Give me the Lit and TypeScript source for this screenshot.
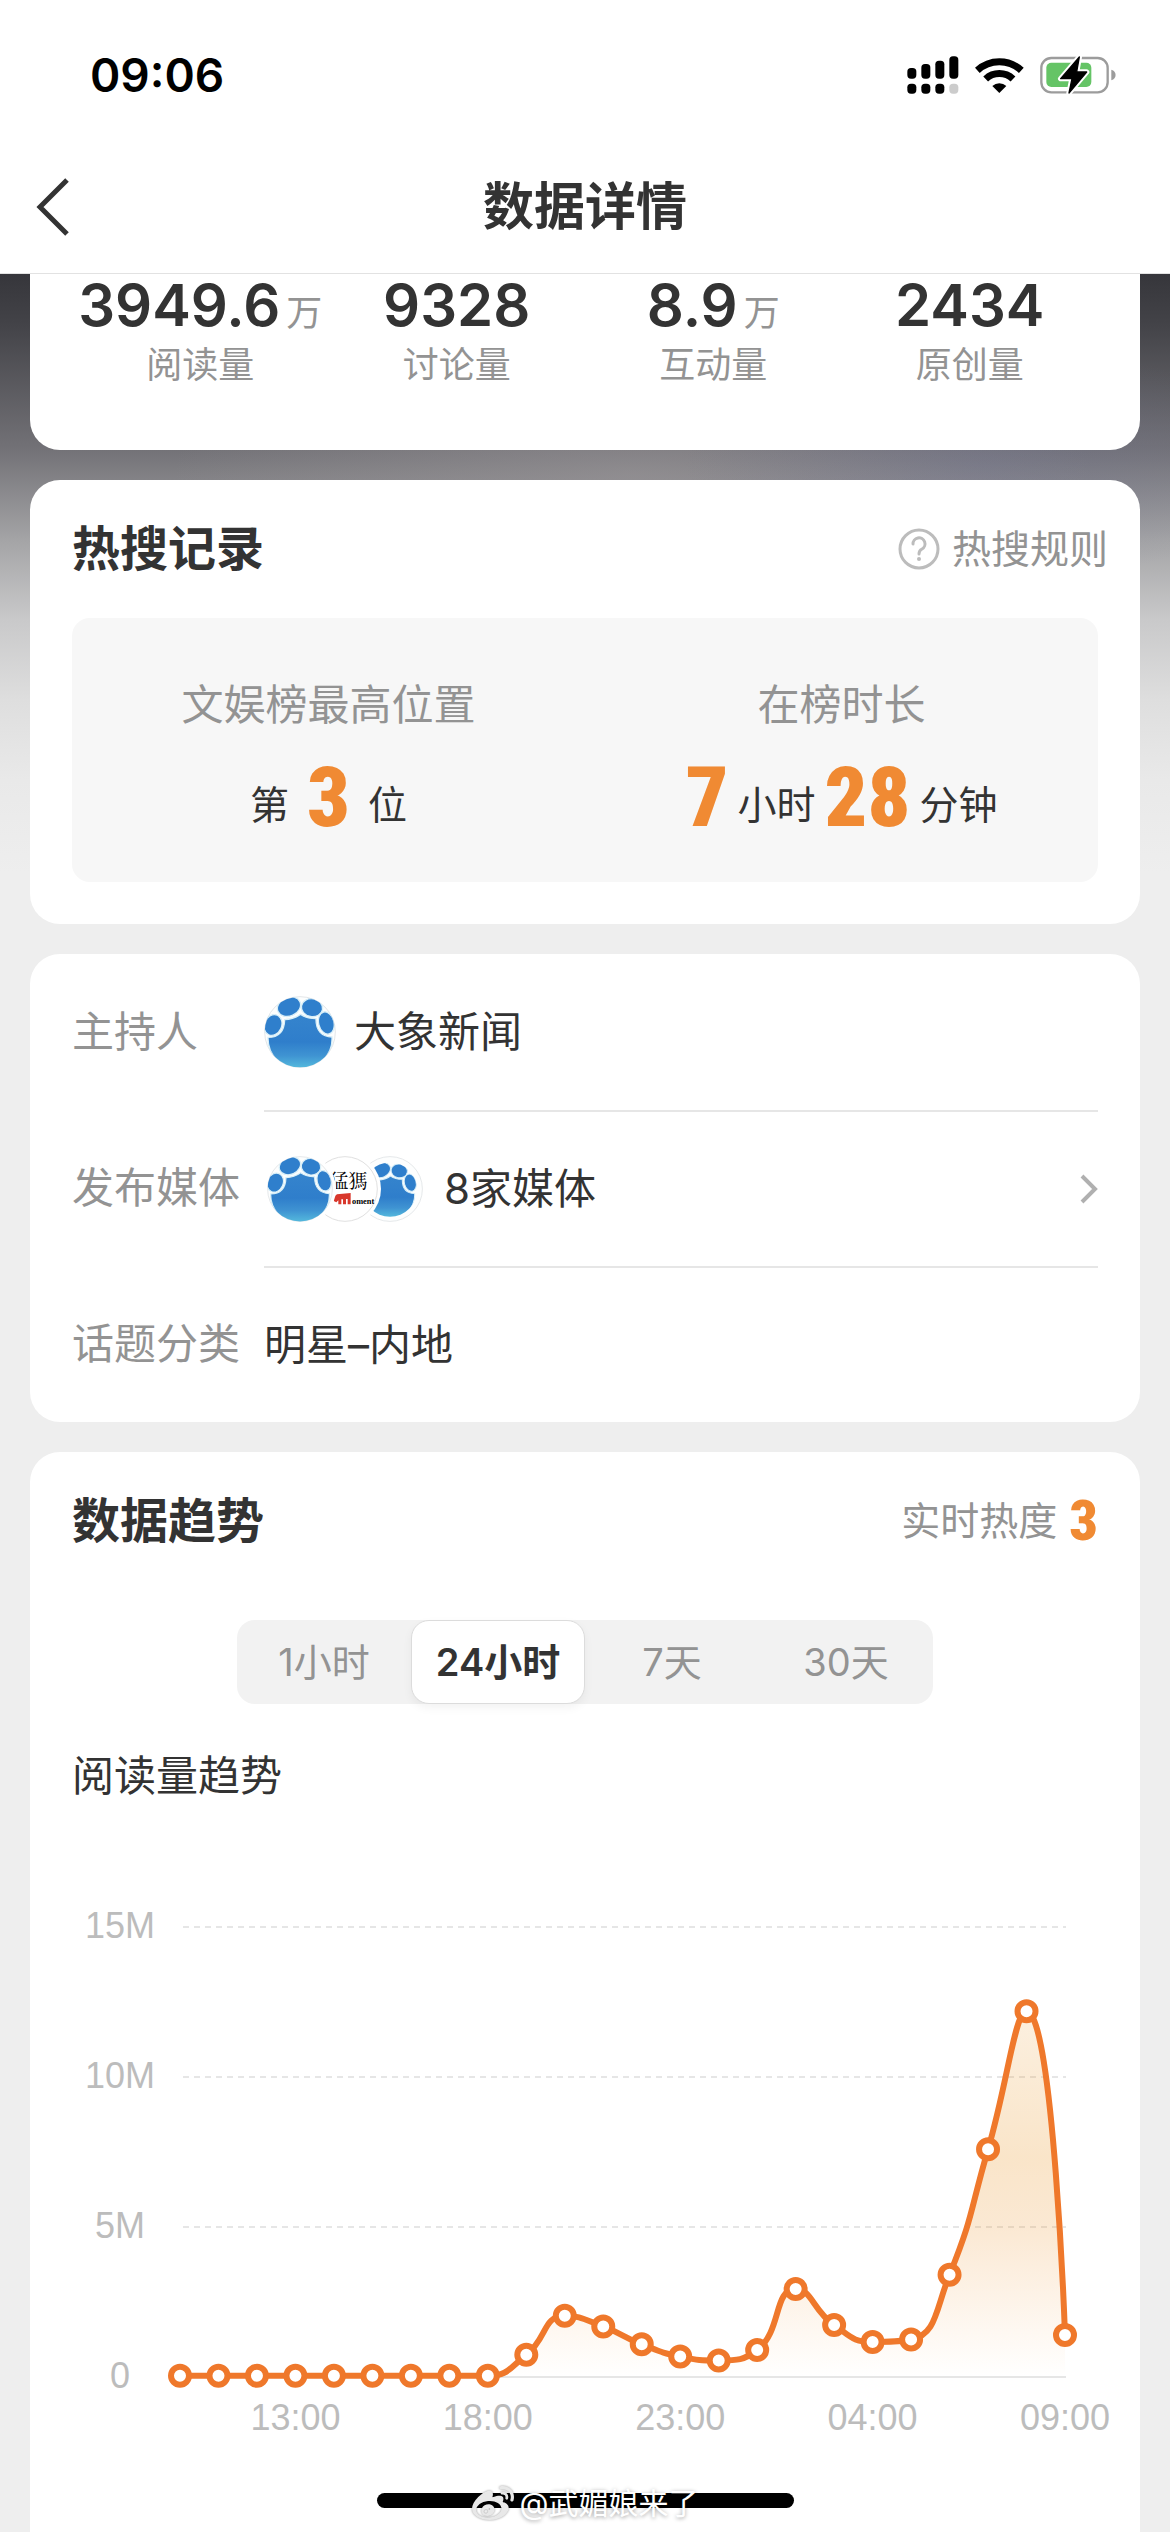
import { LitElement, html, svg, css } from "lit";
import { customElement, property, state } from "lit/decorators.js";
import { classMap } from "lit/directives/class-map.js";

type Point = [number, number];

/** Reads per hour, in millions, oldest first. */
const READS = [
  0.04, 0.04, 0.04, 0.04, 0.04, 0.04, 0.04, 0.04, 0.04, 0.74, 2.04, 1.68, 1.09, 0.68, 0.55, 0.9,
  2.93, 1.73, 1.17, 1.25, 3.41, 7.59, 12.19, 1.4,
];
const HOURS: Array<[number, string]> = [
  [3, "13:00"],
  [8, "18:00"],
  [13, "23:00"],
  [18, "04:00"],
  [23, "09:00"],
];
const LEVELS: Array<[number, string]> = [
  [15, "15M"],
  [10, "10M"],
  [5, "5M"],
  [0, "0"],
];

const clamp = (v: number, a: number, b: number) =>
  Math.max(Math.min(a, b), Math.min(Math.max(a, b), v));

/** Smooth path whose control points never leave the box of their segment. */
function smoothPath(pts: Point[]): string {
  const before: Point[] = [];
  const after: Point[] = [];
  pts.forEach((p, i) => {
    const prev = pts[i - 1];
    const next = pts[i + 1];
    if (!prev || !next) {
      before.push(p);
      after.push(p);
      return;
    }
    const lp = Math.hypot(p[0] - prev[0], p[1] - prev[1]);
    const ln = Math.hypot(next[0] - p[0], next[1] - p[1]);
    const k = (0.5 * ln) / (lp + ln);
    let a: Point = [p[0] + (next[0] - prev[0]) * k, p[1] + (next[1] - prev[1]) * k];
    a = [clamp(a[0], p[0], next[0]), clamp(a[1], p[1], next[1])];
    let b: Point = [p[0] - ((a[0] - p[0]) * lp) / ln, p[1] - ((a[1] - p[1]) * lp) / ln];
    b = [clamp(b[0], p[0], prev[0]), clamp(b[1], p[1], prev[1])];
    a = [p[0] + ((p[0] - b[0]) * ln) / lp, p[1] + ((p[1] - b[1]) * ln) / lp];
    before.push(b);
    after.push(a);
  });
  return pts
    .map((p, i) =>
      i === 0
        ? `M${p.join(" ")}`
        : `C${after[i - 1].join(" ")} ${before[i].join(" ")} ${p.join(" ")}`
    )
    .join("");
}

@customElement("trend-chart")
export class TrendChart extends LitElement {
  static styles = css`
    :host {
      display: block;
    }
    .chart {
      display: block;
      width: 100%;
      overflow: visible;
    }
    .grid {
      stroke: #e6e6e6;
      stroke-width: 2;
    }
    .dashed {
      stroke-dasharray: 6 5;
    }
    .line {
      fill: none;
      stroke: #ef782b;
      stroke-width: 6;
      stroke-linejoin: round;
    }
    .dot {
      fill: #fff;
      stroke: #ef782b;
      stroke-width: 6;
    }
    .tick {
      font: 36px "Liberation Sans", Arial, sans-serif;
      fill: #bcbcbc;
      text-anchor: middle;
    }
  `;

  @property({ attribute: false }) values: number[] = [];

  render() {
    const zero = 571;
    const y = (v: number) => zero - v * 30;
    const x = (i: number) => 108 + (i * 885) / (this.values.length - 1);
    const pts = this.values.map((v, i): Point => [x(i), y(v)]);
    const path = smoothPath(pts);
    return html`
      <svg class="chart" viewBox="0 0 1026 650" role="img" aria-label="阅读量趋势">
        <defs>
          <linearGradient id="fill" x1="0" y1="0" x2="0" y2="1">
            <stop offset="0" stop-color="#e8921e" stop-opacity="0.14" />
            <stop offset="0.4" stop-color="#e8921e" stop-opacity="0.24" />
            <stop offset="0.6" stop-color="#ea9026" stop-opacity="0.2" />
            <stop offset="1" stop-color="#f0902b" stop-opacity="0" />
          </linearGradient>
        </defs>
        ${LEVELS.map(
          ([v, label]) => svg`
            <line class=${v ? "grid dashed" : "grid"} x1="111" x2="994" y1=${y(v)} y2=${y(v)} />
            <text class="tick" x="48" y=${y(v) + 11}>${label}</text>`
        )}
        <path d="${path}L${x(this.values.length - 1)} ${zero}L${x(0)} ${zero}Z" fill="url(#fill)" />
        <path class="line" d=${path} />
        ${pts.map((p) => svg`<circle class="dot" cx=${p[0]} cy=${p[1]} r="9" />`)}
        ${HOURS.map(([i, label]) => svg`<text class="tick" x=${x(i)} y="624">${label}</text>`)}
      </svg>
    `;
  }
}

@customElement("paw-avatar")
export class PawAvatar extends LitElement {
  static styles = css`
    :host {
      display: block;
    }
    .disc {
      display: block;
      width: 100%;
      height: 100%;
    }
  `;

  @property({ type: Boolean }) inset = false;

  render() {
    return html`
      <svg class="disc" viewBox="42 48 216 216" aria-hidden="true">
        <defs>
          <linearGradient id="paw" x1="0" y1="0" x2="0" y2="1">
            <stop offset="0" stop-color="#3584cd" />
            <stop offset="0.5" stop-color="#2f7ecb" />
            <stop offset="0.75" stop-color="#3f93d2" />
            <stop offset="1" stop-color="#57bede" />
          </linearGradient>
          <clipPath id="round"><circle cx="150" cy="156" r="106" /></clipPath>
        </defs>
        <circle cx="150" cy="156" r="106" fill="#fdfefe" stroke="#e3e6e8" stroke-width="3" />
        <g
          clip-path="url(#round)"
          transform=${this.inset ? "translate(24 27) scale(0.84)" : "translate(0 0)"}
        >
          <g stroke="#d8eff8" stroke-width="4">
            <path
              fill="url(#paw)"
              d="M54 172C84 172 103 156 104 119C126 118 141 111 152 103C162 110 176 116 198 116C197 152 216 170 246 171C249 226 204 268 150 268C96 268 53 228 54 172Z"
            />
            <ellipse cx="117" cy="80" rx="36" ry="28" transform="rotate(-24 117 80)" fill="#2f7fcc" />
            <ellipse cx="186" cy="83" rx="32" ry="27" transform="rotate(10 186 83)" fill="#2f7fcc" />
            <ellipse cx="69" cy="135" rx="26" ry="32" transform="rotate(24 69 135)" fill="#2f7fcc" />
            <ellipse cx="229" cy="129" rx="23" ry="34" transform="rotate(-14 229 129)" fill="#2f7fcc" />
          </g>
        </g>
      </svg>
    `;
  }
}

@customElement("app-root")
export class AppRoot extends LitElement {
  static styles = css`
    :host {
      display: block;
      font-family: Inter, "Noto Sans CJK SC", sans-serif;
      color: #333;
    }
    * {
      box-sizing: border-box;
    }
    h1,
    h2,
    h3,
    p,
    dl,
    dd,
    dt {
      margin: 0;
    }
    button {
      font: inherit;
      color: inherit;
      background: none;
      border: 0;
      padding: 0;
    }
    a {
      color: inherit;
      text-decoration: none;
    }
    svg {
      display: block;
      flex: none;
    }
    .screen {
      position: relative;
      display: flex;
      flex-direction: column;
      min-height: 100vh;
      background: #eee;
    }
    .top {
      background: #fff;
      border-bottom: 1px solid #e2e2e2;
    }
    .status {
      display: flex;
      align-items: center;
      justify-content: space-between;
      height: 141px;
      padding: 9px 54px 0 90px;
      color: #000;
    }
    .clock {
      font-size: 46px;
      font-weight: 600;
      line-height: 60px;
    }
    .signals {
      display: flex;
      align-items: center;
      gap: 16px;
    }
    .nav {
      display: grid;
      grid-template-columns: 1fr auto 1fr;
      align-items: center;
      height: 132px;
      padding: 0 36px;
    }
    .title {
      font-size: 51px;
      line-height: 72px;
      font-weight: 600;
    }
    .back {
      justify-self: start;
    }
    .body {
      flex: 1;
      display: flex;
      flex-direction: column;
      gap: 30px;
      padding: 0 30px;
      background:
        radial-gradient(ellipse 300px 120px at 84% 190px, rgba(110, 114, 150, 0.3), transparent),
        radial-gradient(ellipse 460px 160px at 54% 200px, rgba(165, 160, 162, 0.4), transparent),
        linear-gradient(
          #36363b 0,
          #434348 50px,
          #737277 176px,
          #a4a4a6 266px,
          #c9c9ca 346px,
          #dedede 426px,
          #e9e9e9 506px,
          #eee 600px
        );
    }
    .card {
      background: #fff;
      border-radius: 30px;
      padding: 0 42px;
    }
    .stats {
      display: grid;
      grid-template-columns: repeat(4, 1fr);
      border-radius: 0 0 30px 30px;
      padding-bottom: 60px;
    }
    .stat {
      display: flex;
      flex-direction: column-reverse;
      align-items: center;
      gap: 4px;
    }
    .stat-name {
      font-size: 36px;
      line-height: 50px;
      color: #939393;
    }
    .stat-value {
      display: flex;
      align-items: baseline;
      gap: 6px;
      font-size: 58px;
      line-height: 62px;
      font-weight: 600;
    }
    .unit {
      font-size: 36px;
      line-height: 36px;
      font-weight: 400;
      color: #939393;
    }
    .head {
      display: flex;
      align-items: center;
      justify-content: space-between;
      height: 138px;
    }
    .heading {
      font-size: 48px;
      line-height: 66px;
      font-weight: 700;
    }
    .aside {
      display: flex;
      align-items: center;
      gap: 12px;
      font-size: 39px;
      line-height: 54px;
      color: #939393;
    }
    .rules {
      margin-right: -10px;
    }
    .record {
      padding-bottom: 42px;
    }
    .panel {
      display: grid;
      grid-template-columns: 1fr 1fr;
      padding: 57px 0 48px;
      background: #f7f7f7;
      border-radius: 18px;
    }
    .fact {
      display: flex;
      flex-direction: column;
      align-items: center;
      gap: 27px;
    }
    .fact-name {
      font-size: 42px;
      line-height: 60px;
      font-weight: 400;
      color: #939393;
    }
    .fact-value {
      display: flex;
      align-items: flex-end;
      gap: 9px;
      font-size: 39px;
      line-height: 58px;
    }
    .spaced {
      gap: 18px;
    }
    .big,
    .heat {
      font-family: "Roboto Condensed", "Liberation Sans Narrow", "Liberation Sans", sans-serif;
      font-weight: 900;
      color: #f08a33;
    }
    .big {
      font-size: 84px;
      line-height: 72px;
    }
    .heat {
      font-size: 56px;
      line-height: 54px;
    }
    .row {
      display: grid;
      grid-template-columns: 192px 1fr;
      align-items: stretch;
      height: 156px;
      font-size: 42px;
      line-height: 60px;
    }
    .row-name {
      align-self: center;
      color: #939393;
    }
    .row-value {
      display: flex;
      align-items: center;
      gap: 18px;
    }
    .ruled {
      border-top: 2px solid #e6e6e6;
    }
    .link {
      flex: 1;
      display: flex;
      align-items: center;
      gap: 21px;
    }
    .push {
      margin-left: auto;
    }
    .avatar {
      width: 72px;
      height: 72px;
    }
    .stack {
      display: flex;
      padding-left: 3px;
    }
    .chip {
      position: relative;
      width: 66px;
      height: 66px;
      margin-right: -21px;
      border-radius: 50%;
      background: #fff;
      box-shadow: 0 0 0 3px #fff;
    }
    .first {
      z-index: 3;
    }
    .second {
      z-index: 2;
    }
    .third {
      z-index: 1;
      margin-right: 0;
    }
    .brand {
      font-family: "Noto Serif CJK SC", "Noto Sans CJK SC", serif;
      font-size: 58px;
    }
    .brand-sub {
      font: bold 25px "Liberation Serif", serif;
    }
    .trend {
      flex: 1;
      display: flex;
      flex-direction: column;
      border-radius: 30px 30px 0 0;
      padding-bottom: 72px;
    }
    .tabs {
      align-self: center;
      display: grid;
      grid-template-columns: repeat(4, 174px);
      margin-top: 30px;
      border-radius: 18px;
      background: #f2f2f2;
    }
    .tab {
      height: 84px;
      border: 1px solid transparent;
      border-radius: 18px;
      font-size: 38px;
      line-height: 54px;
      color: #939393;
    }
    .selected {
      background: #fff;
      border-color: #dcdcdc;
      box-shadow: 0 4px 10px rgba(0, 0, 0, 0.05);
      font-weight: 600;
      color: #333;
    }
    .subtitle {
      margin-top: 42px;
      font-size: 42px;
      line-height: 60px;
      font-weight: 400;
    }
    .home {
      position: absolute;
      left: 50%;
      bottom: 24px;
      width: 417px;
      height: 15px;
      margin-left: -208px;
      border-radius: 8px;
      background: #000;
    }
    .mark {
      position: absolute;
      left: 0;
      right: 0;
      bottom: 8px;
      display: flex;
      align-items: center;
      justify-content: center;
      gap: 6px;
      font-size: 30px;
      line-height: 40px;
      color: #fff;
      text-shadow: 0 1px 4px rgba(0, 0, 0, 0.4);
    }
    .weibo {
      filter: drop-shadow(0 0 1px rgba(0, 0, 0, 0.4));
    }
  `;

  @state() private range = "24小时";

  private stat(value: string, name: string, unit = "") {
    return html`
      <div class="stat">
        <dt class="stat-name">${name}</dt>
        <dd class="stat-value">${value}${unit ? html`<span class="unit">${unit}</span>` : ""}</dd>
      </div>
    `;
  }

  private signals() {
    const bars = [82, 70, 60, 47];
    return html`
      <div class="signals" aria-hidden="true">
        <svg width="52" height="38" viewBox="80 46 156 114">
          ${bars.map(
            (top, i) => svg`
              <rect x=${81 + i * 42} y=${top} width="27" height=${114 - top} rx="11" />
              <rect x=${81 + i * 42} y="129" width="27" height="30" rx="11" fill=${
                i === 3 ? "#ccc" : "#000"
              } />`
          )}
        </svg>
        <svg width="49" height="38" viewBox="284 42 147 114">
          <g fill="none" stroke="#000" stroke-width="21">
            <path d="M291 85A97 97 0 0 1 423 85" />
            <path d="M316 111A60 60 0 0 1 398 111" />
          </g>
          <path d="M357 153L336 132A30 30 0 0 1 378 132Z" />
        </svg>
        <svg width="76" height="38" viewBox="479 45 228 114">
          <rect x="483" y="51" width="199" height="103" rx="30" fill="none" stroke="#9c9c9c" stroke-width="7" />
          <rect x="498" y="65" width="135" height="73" rx="15" fill="#65c466" />
          <path d="M693 86C710 90 710 114 693 118Z" fill="#9c9c9c" />
          <path
            d="M597 48L541 113H575L566 156L619 93H589Z"
            stroke="#fff"
            stroke-width="16"
            stroke-linejoin="round"
          />
          <path d="M597 48L541 113H575L566 156L619 93H589Z" stroke="#000" stroke-width="4" stroke-linejoin="round" />
        </svg>
      </div>
    `;
  }

  render() {
    const ranges = ["1小时", "24小时", "7天", "30天"];
    return html`
      <div class="screen">
        <header class="top">
          <div class="status">
            <span class="clock">09:06</span>
            ${this.signals()}
          </div>
          <nav class="nav">
            <button class="back" aria-label="返回">
              <svg width="34" height="58" viewBox="0 0 34 58" fill="none" stroke="#333" stroke-width="5">
                <path d="M31 2L4 29L31 56" />
              </svg>
            </button>
            <h1 class="title">数据详情</h1>
          </nav>
        </header>

        <main class="body">
          <dl class="card stats">
            ${this.stat("3949.6", "阅读量", "万")} ${this.stat("9328", "讨论量")}
            ${this.stat("8.9", "互动量", "万")} ${this.stat("2434", "原创量")}
          </dl>

          <section class="card record">
            <div class="head">
              <h2 class="heading">热搜记录</h2>
              <a class="aside rules" href="#rules">
                <svg width="42" height="42" viewBox="0 0 42 42" fill="none" stroke="#bcbcbc" stroke-width="3">
                  <circle cx="21" cy="21" r="19" />
                  <path d="M15 16A6 6 0 1 1 24 21C22 22 21 23 21 26" stroke-linecap="round" />
                  <circle cx="21" cy="31" r="2" fill="#bcbcbc" stroke="none" />
                </svg>
                热搜规则
              </a>
            </div>
            <div class="panel">
              <div class="fact">
                <h3 class="fact-name">文娱榜最高位置</h3>
                <p class="fact-value spaced"><span>第</span><span class="big">3</span><span>位</span></p>
              </div>
              <div class="fact">
                <h3 class="fact-name">在榜时长</h3>
                <p class="fact-value">
                  <span class="big">7</span><span>小时</span><span class="big">28</span><span>分钟</span>
                </p>
              </div>
            </div>
          </section>

          <dl class="card">
            <div class="row">
              <dt class="row-name">主持人</dt>
              <dd class="row-value"><paw-avatar class="avatar"></paw-avatar>大象新闻</dd>
            </div>
            <div class="row">
              <dt class="row-name">发布媒体</dt>
              <dd class="row-value ruled">
                <a class="link" href="#media">
                  <span class="stack">
                    <paw-avatar class="chip first"></paw-avatar>
                    <span class="chip second">
                      <svg width="66" height="66" viewBox="187 525 198 198" aria-hidden="true">
                        <circle cx="286" cy="624" r="97" fill="#fff" stroke="#e0e0e0" stroke-width="3" />
                        <text class="brand" x="238" y="621">猛獁</text>
                        <path
                          fill="#d8372c"
                          d="M252 648L262 640L303 636V670H294V654H289V670H280V655H275V670H266V658L260 664L252 660Z"
                        />
                        <text class="brand-sub" x="307" y="669">oment</text>
                      </svg>
                    </span>
                    <paw-avatar class="chip third" inset></paw-avatar>
                  </span>
                  <span>8家媒体</span>
                  <svg class="push" width="18" height="30" viewBox="0 0 18 30" fill="none" stroke="#b0b0b0" stroke-width="4">
                    <path d="M2 2L15 15L2 28" />
                  </svg>
                </a>
              </dd>
            </div>
            <div class="row">
              <dt class="row-name">话题分类</dt>
              <dd class="row-value ruled">明星–内地</dd>
            </div>
          </dl>

          <section class="card trend">
            <div class="head">
              <h2 class="heading">数据趋势</h2>
              <p class="aside">实时热度<span class="heat">3</span></p>
            </div>
            <div class="tabs" role="tablist">
              ${ranges.map(
                (r) => html`<button
                  class=${classMap({ tab: true, selected: r === this.range })}
                  role="tab"
                  aria-selected=${r === this.range}
                  @click=${() => (this.range = r)}
                >
                  ${r}
                </button>`
              )}
            </div>
            <h3 class="subtitle">阅读量趋势</h3>
            <trend-chart .values=${READS}></trend-chart>
          </section>
        </main>

        <div class="home"></div>
        <div class="mark">
          <svg class="weibo" width="42" height="42" viewBox="0 0 24 24" fill="#e8e8e8" aria-hidden="true">
            <path
              d="M10.098 20.323c-3.977.391-7.414-1.406-7.672-4.02-.259-2.609 2.759-5.047 6.74-5.441 3.979-.394 7.413 1.404 7.671 4.018.259 2.6-2.759 5.049-6.737 5.439l-.002.004zM9.05 17.219c-.384.616-1.208.884-1.829.602-.612-.279-.793-.991-.406-1.593.379-.595 1.176-.861 1.793-.601.622.263.82.972.442 1.592zm1.27-1.627c-.141.237-.449.353-.689.253-.236-.09-.313-.361-.177-.586.138-.227.436-.346.672-.24.239.09.315.36.18.601l.014-.028zm.176-2.719c-1.893-.493-4.033.45-4.857 2.118-.836 1.704-.026 3.591 1.886 4.21 1.983.64 4.318-.341 5.132-2.179.8-1.793-.201-3.642-2.161-4.149zm7.563-1.224c-.346-.105-.57-.18-.405-.615.375-.977.42-1.804 0-2.404-.781-1.112-2.915-1.053-5.364-.03 0 0-.766.331-.571-.271.376-1.217.315-2.224-.27-2.809-1.338-1.337-4.869.045-7.888 3.08C1.309 10.87 0 13.273 0 15.348c0 3.981 5.099 6.395 10.086 6.395 6.536 0 10.888-3.801 10.888-6.82 0-1.822-1.547-2.854-2.915-3.284v.01zm1.908-5.092c-.766-.856-1.908-1.187-2.96-.962-.436.09-.706.511-.616.932.09.42.511.691.932.602.511-.105 1.067.044 1.442.465.376.421.466.977.316 1.473-.136.406.089.856.51.992.405.119.857-.105.992-.512.33-1.021.12-2.178-.646-3.035l.03.045zm2.418-2.195c-1.576-1.757-3.905-2.419-6.054-1.968-.496.104-.812.587-.706 1.081.104.496.586.813 1.082.707 1.532-.331 3.185.15 4.296 1.383 1.112 1.246 1.429 2.943.947 4.416-.165.48.106 1.007.586 1.157.479.165.991-.104 1.157-.586.675-2.088.241-4.478-1.338-6.235l.03.045z"
            />
          </svg>
          @武媚娘来了
        </div>
      </div>
    `;
  }
}
